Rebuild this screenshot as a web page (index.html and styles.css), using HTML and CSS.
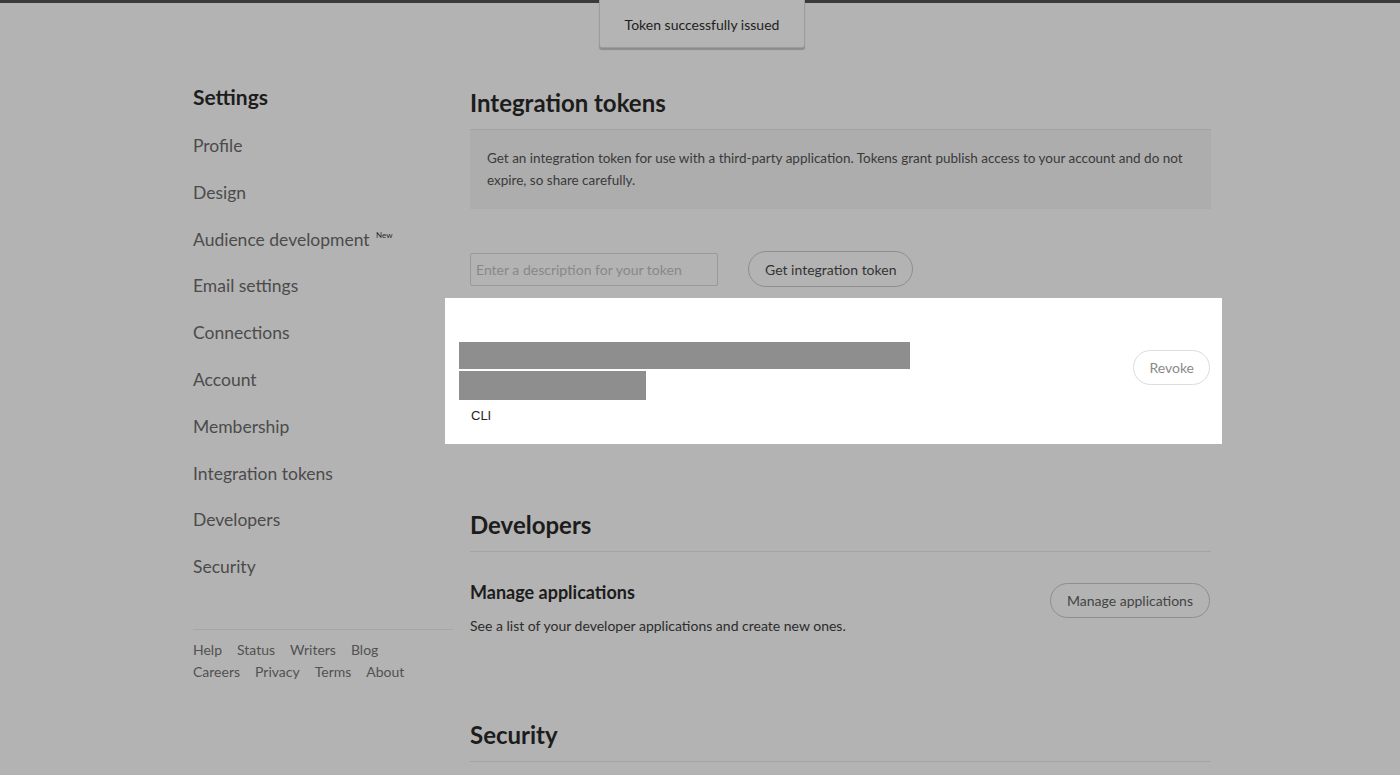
FILE: index.html
```html
<!DOCTYPE html>
<html lang="en">
<head>
<meta charset="utf-8">
<title>Settings — Integration tokens</title>
<link rel="stylesheet" href="styles.css">
</head>
<body>
<div class="topbar"></div>
<div class="toast">Token successfully issued</div>
<div class="page">
  <aside class="sidebar">
    <h1 class="sidebar-title">Settings</h1>
    <nav class="nav">
      <a class="nav-item">Profile</a>
      <a class="nav-item">Design</a>
      <a class="nav-item">Audience development <sup class="badge-new">New</sup></a>
      <a class="nav-item">Email settings</a>
      <a class="nav-item">Connections</a>
      <a class="nav-item">Account</a>
      <a class="nav-item">Membership</a>
      <a class="nav-item">Integration tokens</a>
      <a class="nav-item">Developers</a>
      <a class="nav-item">Security</a>
    </nav>
    <footer class="footer">
      <div class="footer-row">
        <a>Help</a><a>Status</a><a>Writers</a><a>Blog</a>
      </div>
      <div class="footer-row">
        <a>Careers</a><a>Privacy</a><a>Terms</a><a>About</a>
      </div>
    </footer>
  </aside>
  <main class="main">
    <h2 class="section-title">Integration tokens</h2>
    <div class="info-box">Get an integration token for use with a third-party application. Tokens grant publish access to your account and do not expire, so share carefully.</div>
    <div class="token-form">
      <input class="token-input" type="text" placeholder="Enter a description for your token">
      <button class="btn btn-dark">Get integration token</button>
    </div>
    <div class="token-card">
      <div class="token-info">
        <div class="redact redact-long"></div>
        <div class="redact redact-short"></div>
        <div class="token-name">CLI</div>
      </div>
      <button class="btn btn-light">Revoke</button>
    </div>

    <h2 class="section-title section-ruled dev-title">Developers</h2>
    <div class="setting-row">
      <div class="setting-text">
        <h3 class="setting-title">Manage applications</h3>
        <p class="setting-desc">See a list of your developer applications and create new ones.</p>
      </div>
      <button class="btn btn-dark btn-manage">Manage applications</button>
    </div>

    <h2 class="section-title section-ruled sec-title">Security</h2>
  </main>
</div>
</body>
</html>
```

FILE: styles.css
```css
* { box-sizing: border-box; }
html, body { margin: 0; padding: 0; }
body {
  background: #b3b3b3;
  font-family: Lato, "Open Sans", "Noto Sans", sans-serif;
  color: #222;
  height: 775px;
  overflow: hidden;
  position: relative;
}
.topbar {
  height: 3px;
  background: #3a3a3a;
}
.toast {
  position: absolute;
  top: 0;
  left: 599px;
  width: 206px;
  height: 48px;
  background: #b4b4b4;
  border: 1px solid #9c9c9c;
  border-top: none;
  border-radius: 0 0 3px 3px;
  box-shadow: 0 2px 1px rgba(0,0,0,0.22);
  display: flex;
  align-items: center;
  justify-content: center;
  padding-top: 2px;
  font-size: 14px;
  color: #1e1e1e;
}
.page {
  display: flex;
  gap: 17px;
  margin-left: 193px;
  width: 1018px;
}
.sidebar {
  width: 260px;
  flex-shrink: 0;
  padding-top: 80px;
}
.sidebar-title {
  margin: 0;
  font-size: 21px;
  line-height: 28px;
  font-weight: 700;
  color: #1d1d1d;
}
.nav {
  display: flex;
  flex-direction: column;
  gap: 22.8px;
  margin-top: 23px;
}
.nav-item {
  font-size: 17.5px;
  line-height: 24px;
  color: #4b4b4b;
  position: relative;
}
.badge-new {
  font-size: 8px;
  color: #2a2a2a;
  vertical-align: top;
  position: relative;
  top: -5px;
  margin-left: 2px;
}
.footer {
  margin-top: 50px;
  border-top: 1px solid #a6a6a6;
  padding-top: 9px;
}
.footer-row {
  display: flex;
  gap: 15px;
  font-size: 14px;
  line-height: 22px;
  color: #515151;
}
.main {
  width: 741px;
  flex-shrink: 0;
  padding-top: 84px;
}
.section-title {
  margin: 0;
  font-size: 24px;
  line-height: 32px;
  font-weight: 700;
  color: #1c1c1c;
}
.info-box {
  margin-top: 10px;
  background: #adadad;
  border-top: 1px solid #a2a2a2;
  padding: 17px 17px 18px;
  font-size: 13.5px;
  line-height: 22px;
  color: #3a3a3a;
}
.token-form {
  display: flex;
  align-items: center;
  gap: 30px;
  margin-top: 42px;
  height: 36px;
}
.token-input {
  width: 248px;
  height: 33px;
  border: 1px solid #999;
  border-radius: 2px;
  background: #b3b3b3;
  padding: 0 5px;
  font-family: inherit;
  font-size: 14px;
  color: #333;
  outline: none;
}
.token-input::placeholder { color: #888; }
.btn {
  font-family: inherit;
  font-size: 14px;
  border-radius: 999px;
  background: transparent;
  cursor: pointer;
  padding: 0 16px;
}
.btn-dark {
  height: 36px;
  border: 1px solid #8e8e8e;
  color: #333;
}
.btn-light {
  height: 35px;
  border: 1px solid #dcdcdc;
  color: #8a8a8a;
  background: #fff;
  padding: 0 15px;
  margin-top: 8px;
}
.token-card {
  margin: 11px -11px 0 -25px;
  background: #fff;
  padding: 44px 12px 19px 14px;
  display: flex;
  justify-content: space-between;
  align-items: flex-start;
}
.token-info {
  display: flex;
  flex-direction: column;
  gap: 2px;
}
.redact {
  background: #8e8e8e;
}
.redact-long { width: 451px; height: 27px; }
.redact-short { width: 187px; height: 29px; }
.token-name {
  margin-top: 5px;
  padding-left: 12px;
  font-family: "Liberation Sans", Arial, sans-serif;
  font-size: 13px;
  line-height: 18px;
  color: #222;
}
.section-ruled {
  border-bottom: 1px solid #a4a4a4;
  padding-bottom: 10px;
}
.dev-title { margin-top: 65px; }
.setting-row {
  margin-top: 28px;
  display: flex;
  justify-content: space-between;
  align-items: flex-start;
}
.setting-title {
  margin: 0;
  font-size: 18px;
  line-height: 24px;
  font-weight: 700;
  color: #1c1c1c;
}
.setting-desc {
  margin: 12px 0 0;
  font-size: 14px;
  line-height: 20px;
  color: #2c2c2c;
}
.btn-manage {
  height: 35px;
  margin-top: 3px;
  margin-right: 1px;
  color: #444;
}
.sec-title { margin-top: 83px; }
```
